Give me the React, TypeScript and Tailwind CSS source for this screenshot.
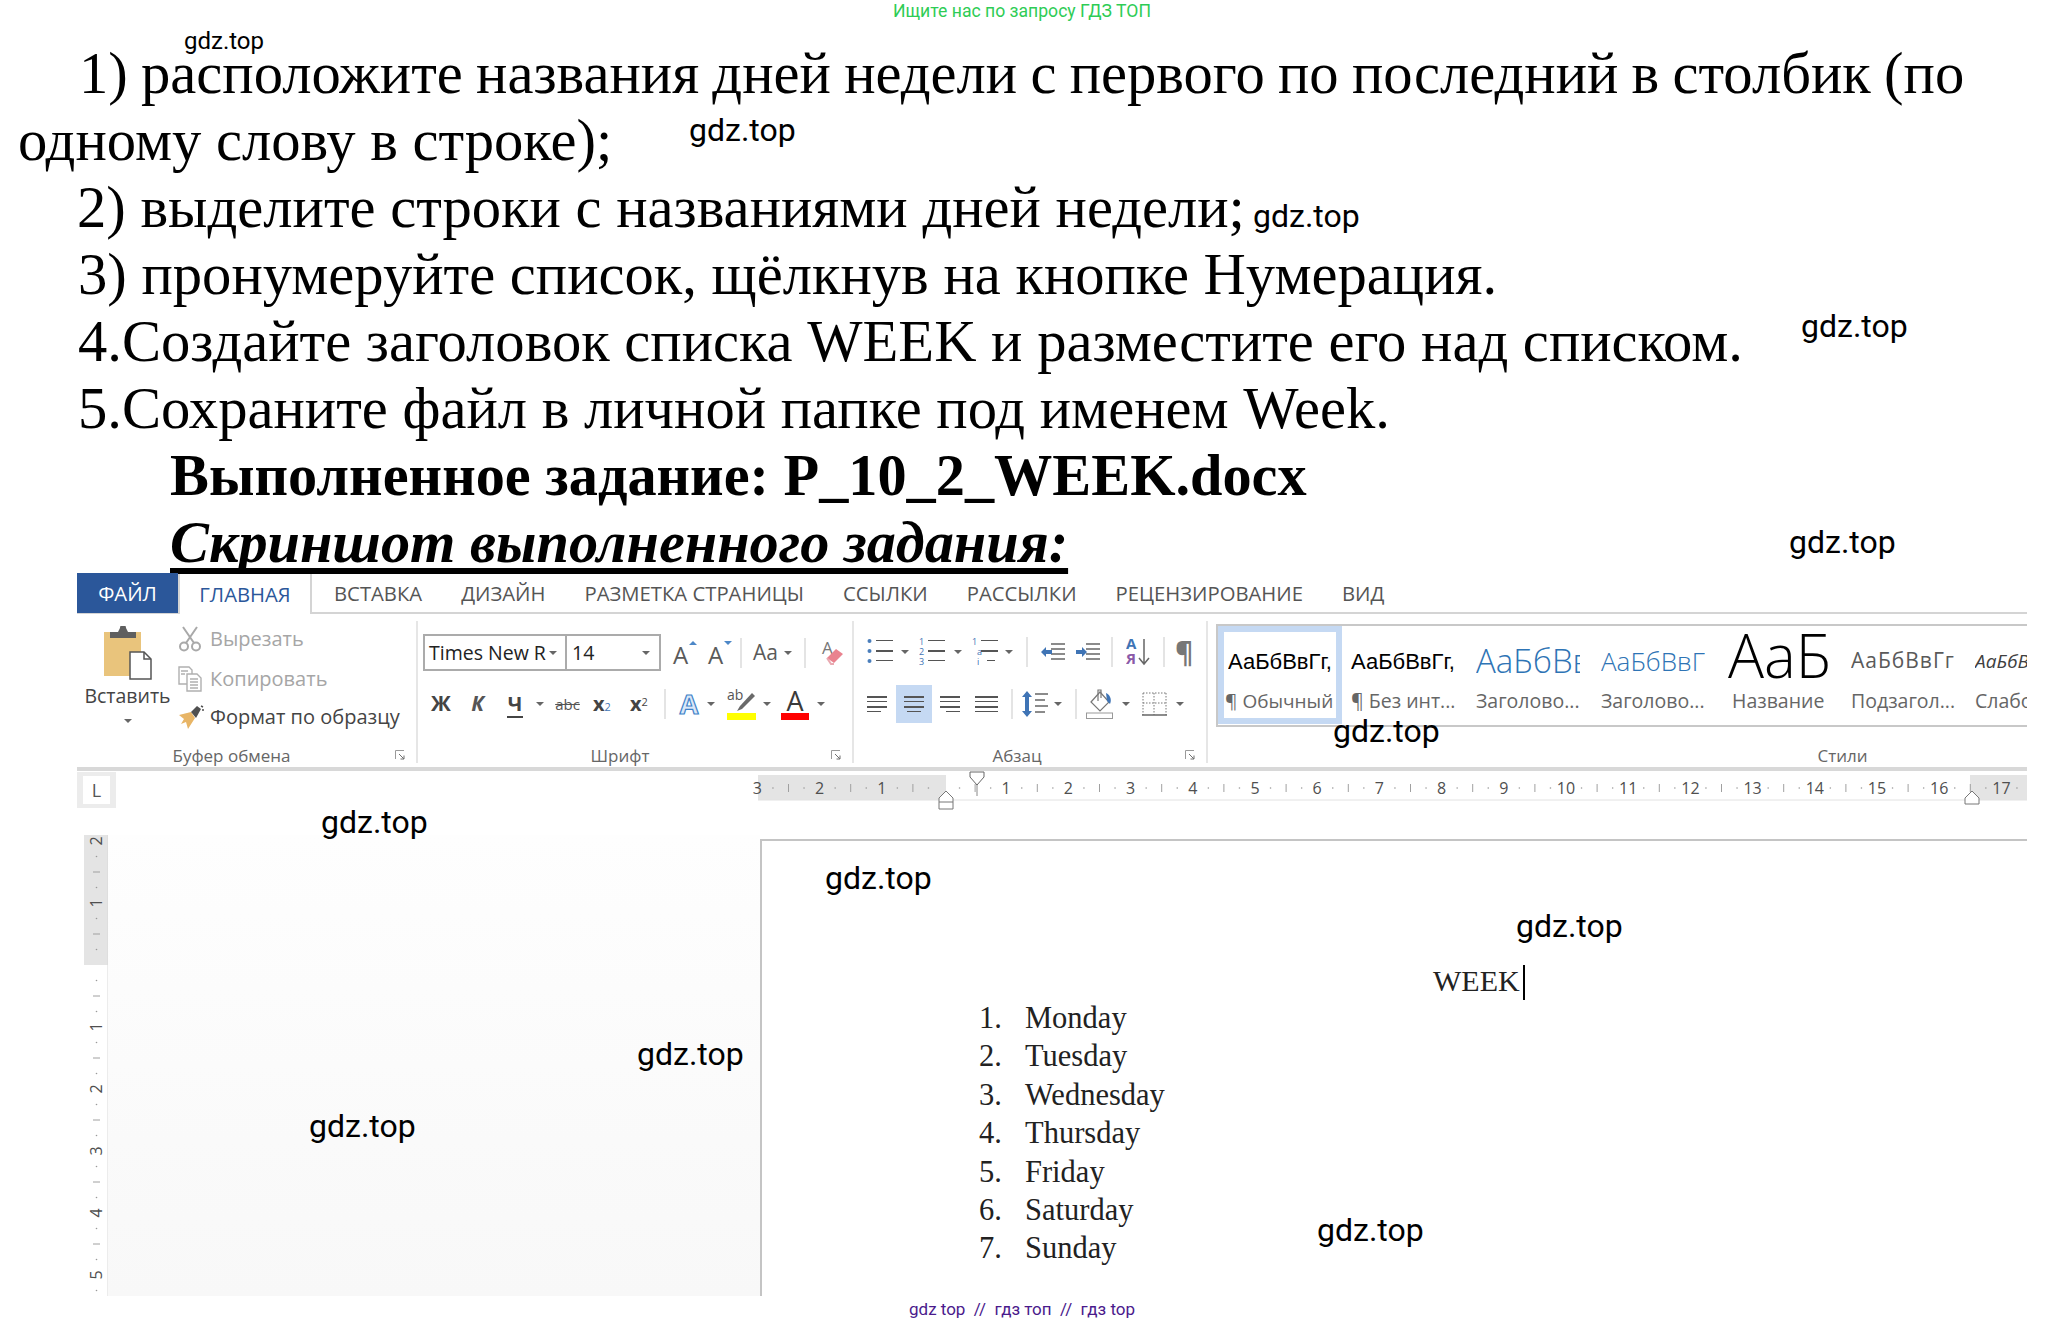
const serif = "font-['Liberation_Serif',serif]"
const ui = "font-['Open_Sans',sans-serif]"

const taskLines = [
  { text: "1) расположите названия дней недели с первого по последний в столбик (по", className: "pl-[79px] [word-spacing:-1.4px]" },
  { text: "одному слову в строке);", className: "pl-[18px]" },
  { text: "2) выделите строки с названиями дней недели;", className: "pl-[77px]" },
  { text: "3) пронумеруйте список, щёлкнув на кнопке Нумерация.", className: "pl-[78px]" },
  { text: "4.Создайте заголовок списка WEEK и разместите его над списком.", className: "pl-[78px]" },
  { text: "5.Сохраните файл в личной папке под именем Week.", className: "pl-[78px]" },
  { text: "Выполненное задание: P_10_2_WEEK.docx", className: "pl-[170px] font-bold text-[58.3px]" },
]

const watermarks = [
  { id: 1, className: "left-[184px] top-[22px] text-[24px]" },
  { id: 2, className: "left-[689px] top-[111px] text-[32px]" },
  { id: 3, className: "left-[1253px] top-[197px] text-[32px]" },
  { id: 4, className: "left-[1801px] top-[307px] text-[32px]" },
  { id: 5, className: "left-[1789px] top-[523px] text-[32px]" },
  { id: 6, className: "left-[1333px] top-[712px] text-[32px]" },
  { id: 7, className: "left-[321px] top-[803px] text-[32px]" },
  { id: 8, className: "left-[825px] top-[859px] text-[32px]" },
  { id: 9, className: "left-[1516px] top-[907px] text-[32px]" },
  { id: 10, className: "left-[637px] top-[1035px] text-[32px]" },
  { id: 11, className: "left-[309px] top-[1107px] text-[32px]" },
  { id: 12, className: "left-[1317px] top-[1211px] text-[32px]" },
]

const days = ["Monday", "Tuesday", "Wednesday", "Thursday", "Friday", "Saturday", "Sunday"]

const styleCells = [
  { label: "¶ Обычный", sample: "АаБбВвГг,", cell: "pl-[10px]", sampleClass: "text-[22px] text-black font-['Liberation_Sans',sans-serif]", clip: "w-[104px]", labelClass: "text-[19px]" },
  { label: "¶ Без инт...", sample: "АаБбВвГг,", cell: "pl-[9px]", sampleClass: "text-[22px] text-black font-['Liberation_Sans',sans-serif]", clip: "w-[104px]", labelClass: "text-[19.5px]" },
  { label: "Заголово...", sample: "АаБбВвГг", cell: "pl-[10px]", sampleClass: "text-[33px] text-[#2e74b5] font-light", clip: "w-[104px]", labelClass: "text-[19.5px]" },
  { label: "Заголово...", sample: "АаБбВвГг", cell: "pl-[11px]", sampleClass: "text-[26px] text-[#2e74b5] font-light", clip: "w-[104px]", labelClass: "text-[19.5px]" },
  { label: "Название", sample: "АаБбВв", cell: "pl-[14px]", sampleClass: "text-[60px] pb-[12px] text-black font-light", clip: "w-[100px]", labelClass: "text-[19.5px] ml-[4px]" },
  { label: "Подзагол...", sample: "АаБбВвГг", cell: "pl-[13px]", sampleClass: "text-[21px] tracking-[1px] text-[#5a5a5a]", clip: "w-[104px]", labelClass: "text-[19.5px]" },
  { label: "Слабое в...", sample: "АаБбВвГг", cell: "pl-[13px]", sampleClass: "text-[19px] italic text-[#404040]", clip: "w-[52px]", labelClass: "text-[19.5px]" },
]

function Arrow({ className = "" }: { className?: string }) {
  return (
    <span
      className={`inline-block w-0 h-0 shrink-0 border-x-[4px] border-x-transparent border-t-[4px] border-t-[#666666] ${className}`}
    />
  )
}

function Sep({ className = "" }: { className?: string }) {
  return <span className={`block w-[2px] h-[30px] shrink-0 bg-[#e4e4e4] ${className}`} />
}

function Launcher() {
  return (
    <svg width="10" height="10" viewBox="0 0 10 10" className="absolute right-[11px] top-[5px]">
      <path d="M0.5 9V0.5H9" fill="none" stroke="#9a9a9a" />
      <path d="M4 4L9 9M9 5.5V9H5.5" fill="none" stroke="#6f6f6f" />
    </svg>
  )
}

function Group({
  label,
  width,
  labelClass,
  launcher = true,
  border = true,
  children,
}: {
  label: string
  width: string
  labelClass: string
  launcher?: boolean
  border?: boolean
  children: React.ReactNode
}) {
  return (
    <div className={`h-[142px] mt-[7px] flex flex-col shrink-0 ${width} ${border ? "border-r-2 border-[#e6e6e6]" : ""}`}>
      <div className="h-[124px] shrink-0">{children}</div>
      <div className={`relative h-[22px] shrink-0 flex items-center justify-center text-[17px] leading-[22px] text-[#666666] ${labelClass}`}>
        {label}
        {launcher && <Launcher />}
      </div>
    </div>
  )
}

function PasteIcon() {
  return (
    <svg width="50" height="54" viewBox="0 0 50 54">
      <rect x="1" y="6" width="37" height="44" fill="#e9c47c" />
      <path d="M7 6h8l2-4a3 3 0 0 1 6 0l2 4h8v6H7z" fill="#5f5f5f" />
      <path d="M27 26h14l7 7v20H27z" fill="#ffffff" stroke="#555555" strokeWidth="1.5" />
      <path d="M41 26v7h7" fill="none" stroke="#555555" strokeWidth="1.5" />
    </svg>
  )
}

function CutIcon() {
  return (
    <svg width="24" height="26" viewBox="0 0 24 26" fill="none" stroke="#a9a9a9" strokeWidth="2">
      <circle cx="6" cy="20.5" r="4" />
      <circle cx="18" cy="20.5" r="4" />
      <path d="M8 17L19 1M16 17L5 1" />
    </svg>
  )
}

function CopyIcon() {
  return (
    <svg width="24" height="26" viewBox="0 0 24 26" fill="#ffffff" stroke="#b0b0b0" strokeWidth="1.4">
      <path d="M1 1h10l3 3v14H1z" />
      <path d="M9 8h10l4 4v13H9z" />
      <path d="M3 5h7M3 8h4M12 13h8M12 16h8M12 19h8M12 22h8" />
    </svg>
  )
}

function BrushIcon() {
  return (
    <svg width="26" height="24" viewBox="0 0 26 24">
      <path d="M1 10L13 7l4 6-7 11-2-7-5 2 3-5z" fill="#e8b566" />
      <path d="M13 7l6-6 4 3-5 9z" fill="#4f4f4f" />
      <path d="M23 1l2 1M24 5l2 0" stroke="#4f4f4f" strokeWidth="1.5" />
    </svg>
  )
}

function SizeButton({ direction, className = "" }: { direction: "up" | "down"; className?: string }) {
  return (
    <span className={`relative block w-[24px] h-[30px] text-[24px] leading-[34px] text-[#5a5a5a] ${className}`}>
      A
      <span
        className={
          direction === "up"
            ? "absolute right-0 top-[3px] w-0 h-0 border-x-[4px] border-x-transparent border-b-[4px] border-b-[#4d87c7]"
            : "absolute right-0 top-[3px] w-0 h-0 border-x-[4px] border-x-transparent border-t-[4px] border-t-[#4d87c7]"
        }
      />
    </span>
  )
}

function EraserIcon({ className = "" }: { className?: string }) {
  return (
    <span className={`relative block w-[22px] h-[30px] text-[17px] leading-[20px] text-[#777777] ${className}`}>
      A
      <svg width="20" height="18" viewBox="0 0 20 18" className="absolute left-[3px] top-[10px]">
        <path d="M2 10L11 1l7 5-9 9z" fill="#e9838f" />
        <path d="M2 10l4 6h3" fill="none" stroke="#e9a9b1" strokeWidth="2" />
      </svg>
    </span>
  )
}

function Lines({ rows, width = 20 }: { rows: [number, number, number][]; width?: number }) {
  return (
    <svg width={width} height="20" viewBox={`0 0 ${width} 20`}>
      {rows.map(([x, y, w], i) => (
        <rect key={i} x={x} y={y} width={w} height={i % 2 ? 1 : 2} fill="#555555" />
      ))}
    </svg>
  )
}

function ListIcon({ kind, className = "" }: { kind: "bullet" | "number" | "multi"; className?: string }) {
  const markers = kind === "bullet" ? ["", "", ""] : kind === "number" ? ["1", "2", "3"] : ["1", "a", "i"]
  return (
    <svg width="27" height="30" viewBox="0 0 27 30" className={`shrink-0 ${className}`}>
      {markers.map((m, i) => (
        <g key={i}>
          {kind === "bullet" ? (
            <circle cx="2.5" cy={4 + i * 10} r="2" fill="#4a7ebb" />
          ) : (
            <text x={i === 0 || kind === "number" ? 0 : 5} y={8 + i * 10} fontSize="9" fill="#3f74b5" fontFamily="Open Sans">
              {m}
            </text>
          )}
          <rect
            x={i === 2 && kind === "multi" ? 15 : 9}
            y={3 + i * 10}
            width={i === 2 && kind === "multi" ? 8 : 17}
            height={i === 1 ? 2 : 1}
            fill="#555555"
          />
        </g>
      ))}
    </svg>
  )
}

function IndentIcon({ flip = false, className = "" }: { flip?: boolean; className?: string }) {
  return (
    <svg width="25" height="20" viewBox="0 0 25 20" className={`shrink-0 ${className}`}>
      <path d="M11 2h14M11 7h14M11 12h14M11 17h14" stroke="#666666" strokeWidth="1.3" />
      <path d={flip ? "M1 8h6V5l5 5-5 5v-3H1z" : "M12 8H6V5l-5 5 5 5v-3h6z"} fill="#3f74b5" />
    </svg>
  )
}

function SortIcon({ className = "" }: { className?: string }) {
  return (
    <svg width="26" height="30" viewBox="0 0 26 30" className={`shrink-0 ${className}`}>
      <text x="0" y="12" fontSize="15" fontWeight="700" fill="#3f74b5" fontFamily="Open Sans">А</text>
      <text x="0" y="27" fontSize="15" fontWeight="700" fill="#8a5aa8" fontFamily="Open Sans">Я</text>
      <path d="M18 2v24M13 21l5 6 5-6" fill="none" stroke="#666666" strokeWidth="1.5" />
    </svg>
  )
}

function ShadingIcon({ className = "" }: { className?: string }) {
  return (
    <svg width="28" height="30" viewBox="0 0 28 30" className={`shrink-0 ${className}`}>
      <path d="M5 13l9-10 9 10-9 9z" fill="#ffffff" stroke="#777777" strokeWidth="1.2" />
      <path d="M12 12V1h3v8" fill="none" stroke="#777777" strokeWidth="1.2" />
      <path d="M20 4c4 2 6 6 4 11l-3-3z" fill="#3f74b5" />
      <rect x="0.5" y="24" width="26" height="5.5" fill="#ffffff" stroke="#999999" />
    </svg>
  )
}

function BordersIcon({ className = "" }: { className?: string }) {
  return (
    <svg width="25" height="24" viewBox="0 0 25 24" className={`shrink-0 ${className}`}>
      <path d="M1 1h23M1 11h23M1 1v22M12 1v22M24 1v22" fill="none" stroke="#777777" strokeDasharray="1.5 1.5" />
      <path d="M0 23h25" stroke="#666666" strokeWidth="1.5" />
    </svg>
  )
}

function HorizontalRuler() {
  const zero = 186
  const step = 62.2
  const marks = Array.from({ length: 21 }, (_, i) => i - 3)
  const ticks = Array.from({ length: 84 }, (_, i) => i - 12)
  return (
    <svg width="1269" height="40" viewBox="0 0 1269 40" className="ml-[642px] shrink-0 overflow-visible">
      <rect x="0" y="3" width="1269" height="25" fill="#e4e4e4" />
      <rect x="188" y="3" width="1024" height="25" fill="#ffffff" />
      <path d="M0 28H1269" stroke="#e2e2e2" />
      {ticks.map((t) => {
        if (t % 4 === 0) return null
        const x = zero + (t * step) / 4
        if (x < 8 || x > 1262) return null
        return t % 2 === 0 ? (
          <path key={t} d={`M${x} 12V20`} stroke="#a0a0a0" />
        ) : (
          <circle key={t} cx={x} cy="16" r="0.8" fill="#9a9a9a" />
        )
      })}
      {marks.map((n) =>
        n === 0 ? null : (
          <text key={n} x={zero + n * step} y="22" textAnchor="middle" fontSize="16" fill="#4f4f4f" fontFamily="Open Sans">
            {Math.abs(n)}
          </text>
        ),
      )}
      <path d="M212 0h14v5l-7 8-7-8z" fill="#ffffff" stroke="#666666" />
      <path d="M219 13v11" stroke="#888888" />
      <path d="M181 26l7-7 7 7v11h-14z" fill="#ffffff" stroke="#777777" />
      <path d="M181 30h14" stroke="#777777" />
      <path d="M1207 26l7-7 7 7v6h-14z" fill="#ffffff" stroke="#777777" />
    </svg>
  )
}

function VerticalRuler() {
  const zero = 130
  const step = 62
  const marks = [-2, -1, 1, 2, 3, 4, 5]
  const ticks = Array.from({ length: 32 }, (_, i) => i - 10)
  return (
    <svg width="24" height="461" viewBox="0 0 24 461" className="shrink-0">
      <rect x="0" y="0" width="24" height="461" fill="#ffffff" />
      <rect x="0" y="0" width="24" height="130" fill="#e4e4e4" />
      <path d="M24 0V461" stroke="#d8d8d8" />
      {ticks.map((t) => {
        if (t % 4 === 0) return null
        const y = zero + (t * step) / 4
        if (y < 8 || y > 458) return null
        return t % 2 === 0 ? (
          <path key={t} d={`M9 ${y}H16`} stroke="#a0a0a0" />
        ) : (
          <circle key={t} cx="12.5" cy={y} r="0.8" fill="#9a9a9a" />
        )
      })}
      {marks.map((n) => (
        <text
          key={n}
          x="12"
          y={zero + n * step}
          transform={`rotate(-90 12 ${zero + n * step})`}
          textAnchor="middle"
          dy="5.5"
          fontSize="16"
          fill="#4f4f4f"
          fontFamily="Open Sans"
        >
          {Math.abs(n)}
        </text>
      ))}
    </svg>
  )
}

function ClipboardGroup() {
  return (
    <Group label="Буфер обмена" width="w-[341px]" labelClass="pr-[30px]">
      <div className="flex">
        <div className="w-[101px] pt-[5px] flex flex-col items-center text-[#444444]">
          <PasteIcon />
          <span className="mt-[4px] text-[19.5px] leading-[24px]">Вставить</span>
          <Arrow className="mt-[11px]" />
        </div>
        <div className="pt-[5px] flex flex-col gap-[13.5px] text-[20px] leading-[24px]">
          <div className="flex items-center gap-[8px] text-[#a6a6a6]">
            <CutIcon />
            Вырезать
          </div>
          <div className="flex items-center gap-[8px] text-[#a6a6a6]">
            <CopyIcon />
            Копировать
          </div>
          <div className="flex items-center gap-[6px] text-[#444444]">
            <BrushIcon />
            Формат по образцу
          </div>
        </div>
      </div>
    </Group>
  )
}

function FontGroup() {
  return (
    <Group label="Шрифт" width="w-[436px]" labelClass="pr-[30px]">
      <div className="pl-[5px] pt-[13px]">
        <div className="flex items-center h-[37px]">
          <div className="flex h-[37px] border-2 border-[#ababab] text-[19.5px] leading-[33px] text-[#222222]">
            <div className="w-[142px] pl-[4px] pr-[8px] flex items-center justify-between border-r-2 border-[#ababab]">
              <span className="whitespace-nowrap">Times New R</span>
              <Arrow />
            </div>
            <div className="w-[92px] pl-[5px] pr-[9px] flex items-center justify-between">
              <span>14</span>
              <Arrow />
            </div>
          </div>
          <SizeButton direction="up" className="ml-[12px]" />
          <SizeButton direction="down" className="ml-[11px]" />
          <Sep className="ml-[8px]" />
          <span className="ml-[11px] w-[25px] text-[21px] text-[#5a5a5a]">Aa</span>
          <Arrow className="ml-[6px]" />
          <Sep className="ml-[12px]" />
          <EraserIcon className="ml-[16px]" />
        </div>
        <div className="mt-[15px] flex items-center h-[36px] text-[#444444]">
          <span className="ml-[7px] w-[22px] text-center font-bold text-[21px]">Ж</span>
          <span className="ml-[17px] w-[17px] text-center font-bold italic text-[21px] text-[#555555]">К</span>
          <span className="ml-[21px] w-[16px] text-center font-bold text-[20px] leading-[25px] border-b-2 border-[#444444]">Ч</span>
          <Arrow className="ml-[13px]" />
          <span className="ml-[10px] w-[27px] text-center text-[15px] line-through text-[#555555]">abc</span>
          <span className="ml-[12px] w-[21px] font-bold text-[20px] whitespace-nowrap">
            x<span className="text-[11px] font-normal text-[#3f74b5]">2</span>
          </span>
          <span className="ml-[16px] w-[21px] font-bold text-[20px] whitespace-nowrap">
            x<sup className="text-[11px] font-normal">2</sup>
          </span>
          <Sep className="ml-[13px]" />
          <span className="ml-[11px] w-[24px] text-center font-bold text-[27px] leading-[36px] text-[#dbe8f7] [-webkit-text-stroke:1.2px_#3f82c9]">
            A
          </span>
          <Arrow className="ml-[6px]" />
          <span className="ml-[12px] w-[29px] h-[32px] flex flex-col justify-end">
            <svg width="29" height="24" viewBox="0 0 29 24">
              <text x="0" y="11" fontSize="14" fill="#555555" fontFamily="Open Sans">ab</text>
              <path d="M10 22l3-5 12-13 3 3-13 13z" fill="#6a6a6a" />
            </svg>
            <span className="block h-[7px] bg-[#ffff00]" />
          </span>
          <Arrow className="ml-[7px]" />
          <span className="ml-[10px] w-[28px] h-[32px] flex flex-col justify-end items-center">
            <span className="text-[27px] leading-[25px] text-[#3a3a3a]">A</span>
            <span className="block w-full h-[7px] bg-[#ff0000]" />
          </span>
          <Arrow className="ml-[8px]" />
        </div>
      </div>
    </Group>
  )
}

function ParagraphGroup() {
  return (
    <Group label="Абзац" width="w-[354px]" labelClass="pr-[26px]">
      <div className="pt-[13px]">
        <div className="flex items-center h-[36px]">
          <ListIcon kind="bullet" className="ml-[13px]" />
          <Arrow className="ml-[7px]" />
          <ListIcon kind="number" className="ml-[10px]" />
          <Arrow className="ml-[8px]" />
          <ListIcon kind="multi" className="ml-[10px]" />
          <Arrow className="ml-[6px]" />
          <Sep className="ml-[13px]" />
          <IndentIcon className="ml-[12px]" />
          <IndentIcon flip className="ml-[10px]" />
          <Sep className="ml-[11px]" />
          <SortIcon className="ml-[13px]" />
          <Sep className="ml-[11px]" />
          <span className="ml-[10px] w-[18px] text-[28px] leading-[32px] text-[#777777] font-bold">¶</span>
        </div>
        <div className="mt-[15px] flex items-center h-[38px]">
          <span className="ml-[13px] w-[20px] flex">
            <Lines rows={[[0, 2, 20], [0, 7, 20], [0, 12, 20], [0, 17, 14]]} />
          </span>
          <span className="ml-[9px] w-[36px] h-[38px] bg-[#c5d9f3] flex items-center justify-center">
            <Lines rows={[[0, 2, 20], [0, 7, 20], [0, 12, 20], [3, 17, 14]]} />
          </span>
          <span className="ml-[8px] w-[20px] flex">
            <Lines rows={[[0, 2, 20], [0, 7, 20], [0, 12, 20], [6, 17, 14]]} />
          </span>
          <span className="ml-[15px] w-[23px] flex">
            <Lines width={23} rows={[[0, 2, 23], [0, 7, 23], [0, 12, 23], [0, 17, 23]]} />
          </span>
          <Sep className="ml-[13px]" />
          <svg width="27" height="30" viewBox="0 0 27 30" className="ml-[8px] shrink-0">
            <path d="M6 2l5 6H8v14h3l-5 6-5-6h3V8H1z" fill="#3f74b5" />
            <path d="M14 5h13M14 11h10M14 17h13M14 23h10" stroke="#666666" strokeWidth="1.5" />
          </svg>
          <Arrow className="ml-[6px]" />
          <Sep className="ml-[13px]" />
          <ShadingIcon className="ml-[9px]" />
          <Arrow className="ml-[8px]" />
          <BordersIcon className="ml-[12px]" />
          <Arrow className="ml-[9px]" />
        </div>
      </div>
    </Group>
  )
}

function StylesGroup() {
  return (
    <Group label="Стили" width="w-[819px]" labelClass="pl-[450px]" launcher={false} border={false}>
      <div className="ml-[8px] mt-[3px] h-[103px] border-y-2 border-l-2 border-[#c8c8c8] flex overflow-hidden">
        {styleCells.map((cell, i) => (
          <div
            key={i}
            className={
              i === 0
                ? `w-[124px] h-[98px] shrink-0 border-[6px] border-[#c5d9f3] pl-[1px] flex flex-col`
                : `w-[124px] h-[98px] pt-[6px] shrink-0 flex flex-col ${cell.cell}`
            }
          >
            <div className={`${cell.clip} h-[57px] pt-[1px] overflow-hidden flex items-center whitespace-nowrap ${i === 0 ? "ml-[3px]" : ""} ${cell.sampleClass}`}>
              {cell.sample}
            </div>
            <div className={`leading-[24px] text-[#666666] whitespace-nowrap overflow-hidden ${cell.labelClass}`}>
              {cell.label}
            </div>
          </div>
        ))}
      </div>
    </Group>
  )
}

function WordWindow() {
  return (
    <div className={`ml-[77px] w-[1950px] h-[722px] ${ui}`}>
      {/* Tabs */}
      <div className="relative z-10 flex items-center h-[40px] border-b-2 border-[#d4d4d4] text-[20.3px] text-[#555555]">
        <div className="w-[101px] h-[40px] bg-[#2b579a] text-white flex items-center justify-center">ФАЙЛ</div>
        <div className="w-[134px] h-[40px] mb-[-2px] bg-white border-x-2 border-[#d4d4d4] text-[#2b579a] flex items-center justify-center">
          ГЛАВНАЯ
        </div>
        <div className="ml-[22px] flex gap-[39px] whitespace-nowrap">
          <span>ВСТАВКА</span>
          <span>ДИЗАЙН</span>
          <span>РАЗМЕТКА СТРАНИЦЫ</span>
          <span>ССЫЛКИ</span>
          <span>РАССЫЛКИ</span>
          <span>РЕЦЕНЗИРОВАНИЕ</span>
          <span>ВИД</span>
        </div>
      </div>

      {/* Ribbon */}
      <div className="flex h-[157px] border-b-4 border-[#d8d8d8]">
        <ClipboardGroup />
        <FontGroup />
        <ParagraphGroup />
        <StylesGroup />
      </div>

      {/* Horizontal ruler */}
      <div className="flex h-[64px] pt-[1px]">
        <div className="w-[39px] h-[36px] shrink-0 bg-[#ececec] py-[4px] px-[6px]">
          <div className="h-full bg-white flex items-center justify-center text-[#555555] text-[18px]">L</div>
        </div>
        <HorizontalRuler />
      </div>

      {/* Document area */}
      <div className="flex h-[461px]">
        <div className="w-[7px] shrink-0" />
        <VerticalRuler />
        <div className="w-[652px] shrink-0 bg-gradient-to-b from-[#fefefe] to-[#f8f8f8]" />
        <div className={`grow mt-[4px] bg-white border-l-2 border-t-2 border-[#c4c4c4] ${serif} text-[30.5px] leading-[38.4px] text-[#222222]`}>
          <div className="h-[158px] pl-[671px] flex items-end">
            <span className="leading-[36px] text-[30px]">WEEK</span>
            <span className="ml-[3px] mb-[-1px] w-[2px] h-[35px] bg-black" />
          </div>
          <ol className="pl-[217px]">
            {days.map((day, i) => (
              <li key={day} className="flex">
                <span className="w-[46px]">{i + 1}.</span>
                {day}
              </li>
            ))}
          </ol>
        </div>
      </div>
    </div>
  )
}

export default function App() {
  return (
    <div className="relative w-[2047px] h-[1324px] bg-white overflow-hidden">
      <div className="h-[40px] pl-[893px] text-[17.6px] leading-[22px] text-[#2ecc55] font-['Roboto',sans-serif]">
        Ищите нас по запросу ГДЗ ТОП
      </div>

      <div className={`h-[534px] ${serif} text-[58.6px] leading-[67px] text-black whitespace-nowrap`}>
        {taskLines.map((line) => (
          <p key={line.text} className={line.className}>
            {line.text}
          </p>
        ))}
        <p className="pl-[170px] font-bold italic text-[58.3px] underline decoration-[6px] underline-offset-[6px] [text-decoration-skip-ink:none]">
          Скриншот выполненного задания:
        </p>
      </div>

      <WordWindow />

      <div className="mt-[2px] pl-[909px] text-[17px] leading-[22px] text-[#4a1a8c] font-['Roboto',sans-serif] whitespace-pre">
        gdz top  //  гдз топ  //  гдз top
      </div>

      {watermarks.map((mark) => (
        <span
          key={mark.id}
          className={`absolute z-20 leading-[38px] text-black font-['Roboto',sans-serif] ${mark.className}`}
        >
          gdz.top
        </span>
      ))}
    </div>
  )
}
